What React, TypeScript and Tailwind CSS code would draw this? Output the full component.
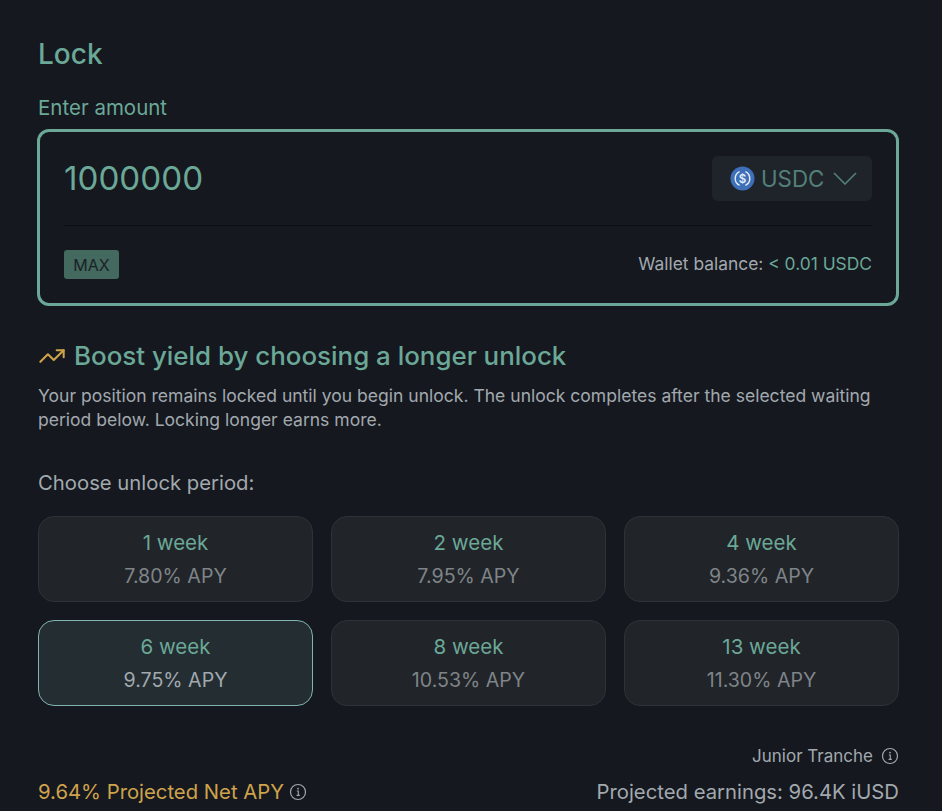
import { FC } from 'react';
import { TrendingUp } from 'lucide-react';

const periods = [
  { label: '1 week', apy: '7.80% APY' },
  { label: '2 week', apy: '7.95% APY' },
  { label: '4 week', apy: '9.36% APY' },
  { label: '6 week', apy: '9.75% APY', selected: true },
  { label: '8 week', apy: '10.53% APY' },
  { label: '13 week', apy: '11.30% APY' },
];

const InfoIcon: FC<{ className?: string }> = ({ className }) => (
  <svg viewBox="0 0 18 18" fill="none" className={className}>
    <circle cx="9" cy="9" r="7.5" stroke="currentColor" strokeWidth="1.2" />
    <circle cx="9" cy="5.6" r="0.9" fill="currentColor" />
    <path d="M7.8 8h1.5v4.4M7.6 12.4h3.2" stroke="currentColor" strokeWidth="1.1" />
  </svg>
);

const UsdcIcon = () => (
  <svg viewBox="0 0 26 26" className="w-[25px] h-[25px] shrink-0">
    <circle cx="13" cy="13" r="12.5" fill="#3e6fb8" />
    <path
      d="M10 5.9a7.8 7.8 0 0 0 0 14.2M16 5.9a7.8 7.8 0 0 1 0 14.2"
      fill="none"
      stroke="#e4ecf7"
      strokeWidth="1.5"
    />
    <text
      x="13"
      y="17.2"
      textAnchor="middle"
      fontSize="12"
      fontWeight="600"
      fill="#e4ecf7"
      fontFamily="Inter, sans-serif"
    >
      $
    </text>
  </svg>
);

export default function App() {
  return (
    <div className="w-[942px] h-[811px] overflow-hidden bg-[#15181f] pl-[37px] pr-[43px] pt-[36px] font-['Inter',sans-serif]">
      <h1 className="pl-[1px] text-[28px] leading-[36px] font-medium text-[#6ba897]">Lock</h1>

      <label className="block mt-[22px] pl-[1px] text-[20.5px] leading-[28px] text-[#6ba897]">
        Enter amount
      </label>
      <div className="mt-[7px] h-[177px] border-[3px] border-[#6ba897] rounded-[12px] px-[24px] pt-[24px]">
        <div className="flex items-center justify-between h-[45px]">
          <span className="-mt-[2px] text-[33.2px] leading-[40px] text-[#6ba897]">1000000</span>
          <div className="flex items-center gap-[6px] w-[160px] h-[45px] pl-[18px] rounded-[6px] bg-[#1e2429] text-[#53807a]">
            <UsdcIcon />
            <span className="text-[22.3px] leading-[28px]">USDC</span>
            <svg viewBox="0 0 24 13" fill="none" className="w-[24px] h-[13px] ml-[3px]">
              <path d="M1 1l11 11L23 1" stroke="currentColor" strokeWidth="1.6" />
            </svg>
          </div>
        </div>
        <div className="mt-[24px] border-t border-[#0c0e12]" />
        <div className="mt-[24px] flex items-center justify-between">
          <button className="w-[55px] h-[29px] rounded-[3px] bg-[#44695f] text-[16px] text-[#1b2226]">
            MAX
          </button>
          <span className="-mt-[1px] text-[17.4px] text-[#a2a9ae]">
            Wallet balance: <span className="text-[#6ba897]">&lt; 0.01 USDC</span>
          </span>
        </div>
      </div>

      <div className="mt-[32px] flex items-center gap-[8px] pl-[1px]">
        <TrendingUp size={28} strokeWidth={1.75} className="text-[#cfa34b]" />
        <h2 className="text-[25.9px] leading-[36px] font-medium text-[#6ba897]">
          Boost yield by choosing a longer unlock
        </h2>
      </div>
      <p className="mt-[10px] pl-[1px] text-[17.55px] leading-[24px] text-[#a2a9ae]">
        Your position remains locked until you begin unlock. The unlock completes after the selected waiting
        period below. Locking longer earns more.
      </p>

      <div className="mt-[37px] pl-[1px] text-[20.3px] leading-[28px] text-[#a2a9ae]">Choose unlock period:</div>

      <div className="mt-[19px] ml-[1px] grid grid-cols-3 gap-[18px]">
        {periods.map((p) => (
          <div
            key={p.label}
            className={`h-[86px] rounded-[16px] border flex flex-col items-center justify-center ${
              p.selected ? 'bg-[#232d32] border-[#7fb5ad]' : 'bg-[#212429] border-[#2e3237]'
            }`}
          >
            <span className="text-[20.5px] leading-[28px] text-[#6ba897]">{p.label}</span>
            <span
              className={`mt-[5px] text-[19.6px] leading-[28px] ${p.selected ? 'text-[#a2a9ae]' : 'text-[#7f8488]'}`}
            >
              {p.apy}
            </span>
          </div>
        ))}
      </div>

      <div className="mt-[38px] flex justify-end items-center gap-[8px] text-[17px] leading-[24px] text-[#a2a9ae]">
        Junior Tranche
        <InfoIcon className="w-[18px] h-[18px]" />
      </div>
      <div className="mt-[10px] ml-[1px] flex items-center justify-between text-[20.3px] leading-[28px]">
        <div className="flex items-center gap-[5px] text-[#cfa34b]">
          9.64% Projected Net APY
          <InfoIcon className="w-[18px] h-[18px] text-[#a2a9ae]" />
        </div>
        <span className="text-[#a2a9ae]">Projected earnings: 96.4K iUSD</span>
      </div>
    </div>
  );
}
